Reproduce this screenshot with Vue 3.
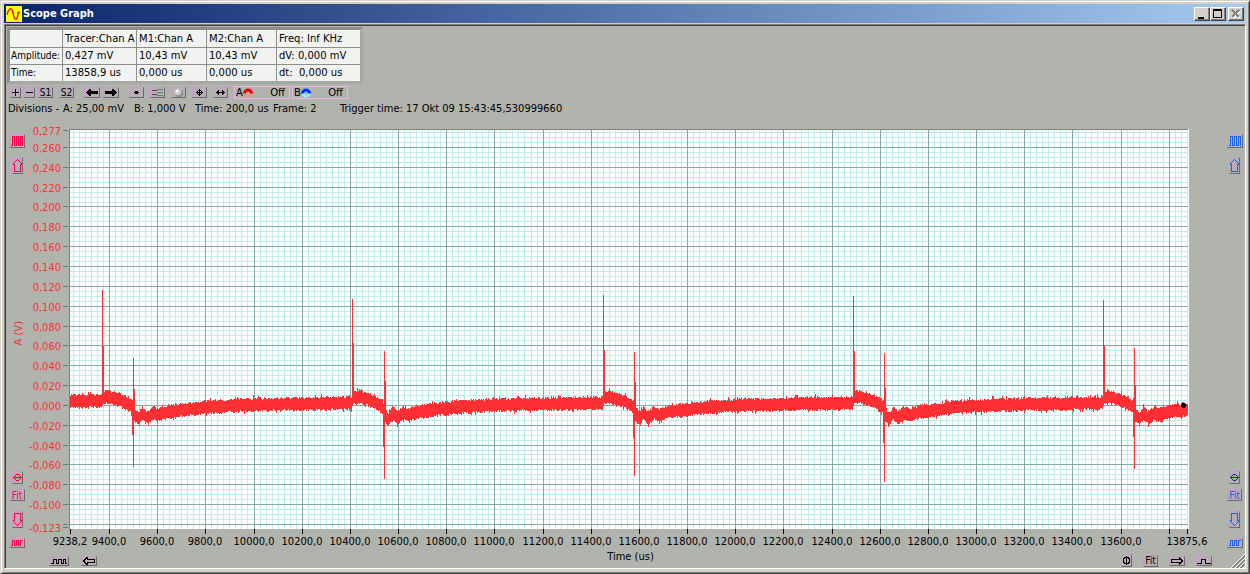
<script setup>
const readings = {
  head: ['Tracer:Chan A', 'M1:Chan A', 'M2:Chan A', 'Freq: Inf KHz'],
  rows: [
    { name: 'Amplitude:', cells: ['0,427 mV', '10,43 mV', '10,43 mV', 'dV: 0,000 mV'] },
    { name: 'Time:', cells: ['13858,9 us', '0,000 us', '0,000 us', 'dt:\u00a0 0,000 us'] },
  ],
}

const X_MIN = 9238.2
const X_MAX = 13875.6
const plot = { left: 69, top: 129, width: 1120, height: 400 }
const px = (t) => Math.floor(70.52 + ((t - X_MIN) / (X_MAX - X_MIN)) * 1117)
const py = (v) => Math.floor(405.38 - v * 992)
const comma = (n, d) => n.toFixed(d).replace('.', ',')

const xValues = [X_MIN]
for (let t = 9400; t <= 13600; t += 200) xValues.push(t)
xValues.push(X_MAX)
const xLabels = xValues.map((t) => ({ text: comma(t, 1), pos: ((px(t) - plot.left) / plot.width) * 100 }))
const xTicks = [...xValues, 13800].map(px)

const yValues = [0.277]
for (let i = 13; i >= -5; i--) yValues.push(i / 50)
yValues.push(-0.123)
const yLabels = yValues.map((v) => ({ text: comma(v, 3), pos: ((py(v) - plot.top) / plot.height) * 100 }))
const yTicks = [...yValues, -0.12].map(py)

let minor = ''
let major = ''
for (let i = 0; i < 186; i++) {
  const t = 9250 + i * 25
  const seg = `M${px(t)} 130h1v399h-1z`
  if (t % 200 === 0) major += seg
  else minor += seg
}
for (let i = 55; i >= -24; i--) {
  const seg = `M70 ${py(i / 200)}h1118v1h-1118z`
  if (i % 4 === 0) major += seg
  else minor += seg
}

let seed = 71
const rnd = () => {
  seed = (seed * 16807) % 2147483647
  return seed / 2147483647
}
const profile = [[0, 398], [6, 397], [14, 399], [22, 402], [30, 407], [32, 415], [36, 419], [40, 413], [45, 418],
  [51, 413], [56, 415], [65, 412], [80, 410], [105, 407], [145, 405], [190, 404], [250, 403]]
const centre = (t) => {
  for (let i = 1; i < profile.length; i++) {
    const [b, yb] = profile[i]
    if (t <= b) {
      const [a, ya] = profile[i - 1]
      return ya + ((yb - ya) * (t - a)) / (b - a)
    }
  }
  return 403
}
const pulses = [
  { x: 102, top: 290, side: 346, x2: 133, top2: 358, side2: 389, low: 467, lowSide: 435 },
  { x: 352, top: 299, side: 343, x2: 384, top2: 351, side2: 381, low: 479, lowSide: 447 },
  { x: 603, top: 295, side: 350, x2: 634, top2: 352, side2: 382, low: 476, lowSide: 438 },
  { x: 853, top: 296, side: 351, x2: 884, top2: 353, side2: 388, low: 482, lowSide: 443 },
  { x: 1103, top: 300, side: 346, x2: 1134, top2: 348, side2: 385, low: 469, lowSide: 437 },
]
let trace = ''
for (let x = 70; x < 1188; x++) {
  const pulse = [...pulses].reverse().find((p) => p.x <= x)
  const mid = pulse ? centre(x - pulse.x) : 401
  const up = Math.round(mid - 5 - rnd() * 2.4 - (rnd() > 0.88 ? 2 : 0))
  const down = Math.round(mid + 5 + rnd() * 2.4 + (rnd() > 0.9 ? 2 : 0))
  trace += `M${x} ${up}h1V${down}h-1z`
}
for (const p of pulses) {
  trace += `M${p.x} ${p.top}h1V406h-1zM${p.x + 1} ${p.side}h1V402h-1z`
  trace += `M${p.x2} ${p.top2}h1V${p.low}h-1zM${p.x2 + 1} ${p.side2}h1V415h-1zM${p.x2 - 1} 404h1V${p.lowSide}h-1z`
}

const sides = ['left', 'right']
</script>

<template>
  <div class="window">
    <header class="titlebar">
      <svg class="logo" viewBox="0 0 16 16" aria-hidden="true">
        <rect width="16" height="16" fill="#ff0" />
        <path d="M1.500 9V6.500L3 4Q5 1 6.500 5L8 11Q9.500 15 11 12L12 9V6.500H14" fill="none" stroke="#e00000" stroke-width="1.300" />
      </svg>
      <h1>Scope Graph</h1>
      <div class="controls">
        <button aria-label="Minimize"><svg width="12" height="10" viewBox="0 0 12 10"><path d="M2 8h6v2H2z" /></svg></button>
        <button aria-label="Maximize"><svg width="12" height="10" viewBox="0 0 12 10"><path d="M1 0h9v9H1zM2 2v6h7V2z" fill-rule="evenodd" /></svg></button>
        <button class="close" aria-label="Close" disabled>
          <svg width="12" height="10" viewBox="0 0 12 10" fill="none" stroke-width="2"><path d="M3 2l7 7M10 2l-7 7" stroke="#fff" /><path d="M2 1l7 7M9 1l-7 7" stroke="#808080" /></svg>
        </button>
      </div>
    </header>

    <main class="body">
      <table class="readings">
        <thead>
          <tr><td class="name"></td><th v-for="h in readings.head" :key="h" scope="col">{{ h }}</th></tr>
        </thead>
        <tbody>
          <tr v-for="r in readings.rows" :key="r.name">
            <th class="name" scope="row">{{ r.name }}</th>
            <td v-for="(c, i) in r.cells" :key="i">{{ c }}</td>
          </tr>
        </tbody>
      </table>

      <div class="toolbar">
        <div class="group zooms">
          <button class="tool sq" aria-label="Zoom in"><svg width="7" height="7" viewBox="0 0 7 7"><path d="M3 0h1v3h3v1H4v3H3V4H0V3h3z" /></svg></button>
          <button class="tool sq" aria-label="Zoom out"><svg width="7" height="7" viewBox="0 0 7 7"><path d="M0 3h7v1H0z" /></svg></button>
          <button class="tool text">S1</button>
        </div>
        <button class="tool text">S2</button>
        <div class="group arrows">
          <button class="tool wide" aria-label="Previous"><svg width="12" height="7" viewBox="0 0 12 7"><path d="M0 3h1V2h1V1h1V0h2v2h7v3H5v2H3V6H2V5H1V4H0z" /></svg></button>
          <button class="tool wide" aria-label="Next"><svg width="12" height="7" viewBox="0 0 12 7"><path d="M12 3h-1V2h-1V1H9V0H7v2H0v3h7v2h2V6h1V5h1V4h1z" /></svg></button>
        </div>
        <div class="group modes">
          <button class="tool mid" aria-label="Points"><svg width="7" height="5" viewBox="0 0 7 5"><path d="M2 1h3v1h1v1H5v1H2V3H1V2h1z" /></svg></button>
          <button class="tool mid" aria-label="List"><svg width="11" height="7" viewBox="0 0 11 7"><path d="M0 1h5v1H0zM0 5h5v1H0z" fill="#444" /><path d="M5 0h6v1H5zM5 3h6v1H5zM5 6h6v1H5z" fill="#4c9160" /></svg></button>
          <button class="tool mid" aria-label="Marker"><svg class="smooth" width="11" height="9" viewBox="0 0 11 9"><circle cx="6" cy="5" r="4" fill="#858585" /><circle cx="5" cy="4" r="3.500" fill="#c6c6c2" /><circle cx="4" cy="3" r="1.500" fill="#fff" /></svg></button>
          <button class="tool mid" aria-label="Move vertically"><svg width="7" height="7" viewBox="0 0 7 7"><path d="M3 0h1v1h1v1h1v1h1v1H6v1H5v1H4v1H3V6H2V5H1V4H0V3h1V2h1V1h1z" /><path d="M2 2h1v1H2zM4 2h1v1H4zM2 4h1v1H2zM4 4h1v1H4z" fill="#b8adb7" /></svg></button>
          <button class="tool mid" aria-label="Move horizontally"><svg width="9" height="7" viewBox="0 0 9 7"><path d="M2 1h1v2h3V1h1v1h1v1h1v1H8v1H7v1H6V4H3v2H2V5H1V4H0V3h1V2h1z" /></svg></button>
        </div>
        <div class="group channels">
          <button class="channel"><span>A</span>
            <svg class="smooth" width="10" height="10" viewBox="0 0 10 10"><circle cx="5" cy="5" r="3.300" fill="none" stroke="#ff9090" stroke-width="2.500" /><path d="M1.500 5.500A3.500 3.500 0 0 1 8.500 5.500" fill="none" stroke="#e80000" stroke-width="3" /></svg>
            <span class="state">Off</span></button>
          <button class="channel"><span>B</span>
            <svg class="smooth" width="10" height="10" viewBox="0 0 10 10"><circle cx="5" cy="5" r="3.300" fill="none" stroke="#90f4ff" stroke-width="2.500" /><path d="M1.500 5.500A3.500 3.500 0 0 1 8.500 5.500" fill="none" stroke="#0030ff" stroke-width="3" /></svg>
            <span class="state">Off</span></button>
        </div>
      </div>

      <div class="status">
        <span class="divisions">Divisions -</span>
        <span class="a">A: 25,00 mV</span>
        <span class="b">B: 1,000 V</span>
        <span class="time">Time: 200,0 us</span>
        <span class="frame">Frame: 2</span>
        <span>Trigger time: 17 Okt 09 15:43:45,530999660</span>
      </div>

      <section class="chart">
        <div v-for="side in sides" :key="side" class="side" :class="side">
          <div class="stack">
            <button class="tool pulses" aria-label="More cycles"><svg width="14" height="10" viewBox="0 0 14 10"><path d="M1 9.500h1.500v-9h2v9h2v-9h2v9h2v-9h2v9" fill="none" stroke="currentColor" /></svg></button>
            <button class="tool tall" aria-label="Shift up"><svg width="9" height="13" viewBox="0 0 9 13"><path d="M4.500 .5L.5 4.500v1h1v7h6v-7h1v-1z" fill="none" stroke="currentColor" /></svg></button>
          </div>
          <span v-if="side === 'left'" class="ytitle">A (V)</span>
          <div class="stack low">
            <button class="tool zero" aria-label="Zero offset"><svg width="9" height="9" viewBox="0 0 9 9"><path d="M3 1h3v1h1v1h1v1h1v1H8v1H7v1H6v1H3V7H2V6H1V5H0V4h1V3h1V2h1zM3 2v1H2v1h5V3H6V2zM2 5v1h1v1h3V6h1V5z" fill="currentColor" fill-rule="evenodd" /></svg></button>
            <button class="tool fit">Fit</button>
            <button class="tool tall down" aria-label="Shift down"><svg width="9" height="13" viewBox="0 0 9 13"><path d="M4.500 12.500L.5 8.500v-1h1v-7h6v7h1v1z" fill="none" stroke="currentColor" /></svg></button>
            <button class="tool short" aria-label="Fewer cycles"><svg width="14" height="6" viewBox="0 0 14 6"><path d="M1 5.500h1.500v-5h2v5h2v-5h2v5h2v-5H13" fill="none" stroke="currentColor" /></svg></button>
          </div>
        </div>

        <div class="yaxis">
          <span v-for="l in yLabels" :key="l.text" class="ylabel" :style="{ top: l.pos + '%' }">{{ l.text }}</span>
          <svg viewBox="0 129 5 400" preserveAspectRatio="none" aria-hidden="true"><path v-for="y in yTicks" :key="y" :d="`M0 ${y}h5v1H0z`" fill="#4c8484" /></svg>
        </div>

        <svg class="plot" viewBox="69 129 1120 400" preserveAspectRatio="none" role="img" aria-label="Channel A voltage over time">
          <rect x="69" y="129" width="1120" height="400" fill="#fff" />
          <path :d="minor" fill="#bfecec" />
          <path :d="major" fill="#84aaa6" />
          <path d="M69 129h1119v1H70v399h-1z" fill="#7c7f7c" />
          <path :d="trace" fill="#ff3033" />
          <path d="M1182 403h3v1h1v3h-1v1h-3v-1h-1v-3h1z" />
        </svg>

        <div class="xaxis">
          <svg viewBox="69 0 1120 5" preserveAspectRatio="none" aria-hidden="true"><path v-for="x in xTicks" :key="x" :d="`M${x} 0h1v5h-1z`" /></svg>
          <span v-for="l in xLabels" :key="l.text" class="xlabel" :style="{ left: l.pos + '%' }">{{ l.text }}</span>
        </div>
      </section>

      <footer class="bottom">
        <div class="bgroup start">
          <button class="tool bpulse" aria-label="Compress time"><svg width="16" height="6" viewBox="0 0 16 6"><path d="M0 5.500h2.500v-4h3v4h2v-4h3v4h2v-4h2v4H16" fill="none" stroke="currentColor" /></svg></button>
          <button class="tool barrow" aria-label="Scroll left"><svg width="12" height="8" viewBox="0 0 12 8"><path d="M.5 4L4 .5v2h7.500v3H4v2z" fill="none" stroke="currentColor" /></svg></button>
        </div>
        <span class="xtitle">Time (us)</span>
        <div class="bgroup end">
          <button class="tool bzero" aria-label="Zero time"><svg width="9" height="9" viewBox="0 0 9 9"><path d="M2.500 1.500h4v1h1v4h-1v1h-4v-1h-1v-4h1zM4.500 0v9" fill="none" stroke="currentColor" /></svg></button>
          <button class="tool fit">Fit</button>
          <button class="tool barrow" aria-label="Scroll right"><svg width="12" height="8" viewBox="0 0 12 8"><path d="M11.500 4L8 .5v2H.5v3H8v2z" fill="none" stroke="currentColor" /></svg></button>
          <button class="tool bstep" aria-label="Expand time"><svg width="14" height="6" viewBox="0 0 14 6"><path d="M0 5.500h4.500v-4h4v4H14" fill="none" stroke="currentColor" /></svg></button>
        </div>
      </footer>
      <svg class="grip smooth" width="14" height="14" viewBox="0 0 14 14" aria-hidden="true">
        <path d="M0 14L14 0M4 14L14 4M8 14l6-6M12 14l2-2" stroke="#fff" /><path d="M1 14L14 1M2 14L14 2M5 14l9-9M6 14l8-8M9 14l5-5M10 14l4-4" stroke="#808080" />
      </svg>
    </main>
  </div>
</template>

<style>
body {
  background: #d4d0c8;
}
</style>

<style scoped>
* {
  box-sizing: border-box;
}
.window {
  display: flex;
  flex-direction: column;
  min-height: 100vh;
  padding: 2px;
  border: 1px solid;
  border-color: #d4d0c8 #404040 #404040 #d4d0c8;
  box-shadow: inset 1px 1px #fff, inset -1px -1px #808080;
  background: #d4d0c8;
  font: 11px/14px "DejaVu Sans Condensed", "DejaVu Sans", sans-serif;
  color: #000;
}
svg {
  display: block;
  flex: none;
  shape-rendering: crispEdges;
}
.smooth,
.logo {
  shape-rendering: auto;
}
button {
  font: inherit;
  color: inherit;
  padding: 0;
  margin: 0;
  border-radius: 0;
}
.titlebar {
  display: flex;
  align-items: center;
  height: 19px;
  margin: 1px;
  padding: 0 2px;
  background: linear-gradient(90deg, #0a246a, #a6caf0);
}
.logo {
  width: 16px;
  height: 16px;
}
h1 {
  flex: 1;
  margin: 0 0 0 1px;
  font-size: 11px;
  line-height: 16px;
  color: #fff;
}
.controls {
  display: flex;
}
.controls button {
  display: grid;
  place-items: center;
  width: 16px;
  height: 14px;
  border: 1px solid;
  border-color: #fff #404040 #404040 #fff;
  background: #d4d0c8;
  box-shadow: inset -1px -1px #808080;
}
.controls .close {
  margin-left: 2px;
}
.body {
  position: relative;
  flex: 1;
  display: flex;
  flex-direction: column;
  margin: 0 1px 2px;
  border: 1px solid;
  border-color: #808080 #fff #fff #808080;
  box-shadow: inset 1px 1px #404040;
  padding: 2px 1px 0 1px;
  background: #b1b3ad;
}
.readings {
  align-self: flex-start;
  border: 3px solid;
  border-color: #8e908b #a6a8a2 #a6a8a2 #8e908b;
  margin-left: 1px;
  border-collapse: separate;
  border-spacing: 0;
  font: 10px/16px "DejaVu Sans", sans-serif;
  background: #f1f3f0;
}
.readings th,
.readings td {
  width: 70px;
  height: 17px;
  padding: 0 0 0 2px;
  border: solid #8c8e8a;
  border-width: 0 1px 1px 0;
  text-align: left;
  font-weight: 400;
  white-space: nowrap;
}
.readings thead tr > * {
  height: 18px;
}
.readings th:nth-child(2),
.readings td:nth-child(2) {
  width: 74px;
}
.readings .name {
  width: 53px;
  padding-left: 1px;
  font-family: "DejaVu Sans Condensed", sans-serif;
}
.readings th:last-child,
.readings td:last-child {
  width: 83px;
  border-right: 0;
}
.readings tbody tr:last-child > * {
  height: 16px;
  border-bottom: 0;
}
.toolbar {
  display: flex;
  align-items: center;
  height: 13px;
  margin: 2px 0 0 4px;
}
.group,
.bgroup {
  display: flex;
  align-items: center;
}
.tool {
  display: grid;
  place-items: center;
  border: 1px solid;
  border-color: #cc9acc #6c6a70 #6c6a70 #cc9acc;
  background: #b8adb7;
  font: 10px/9px "DejaVu Sans Condensed", sans-serif;
}
.toolbar .tool {
  height: 11px;
}
.zooms {
  gap: 3px;
  margin-right: 6px;
}
.sq {
  width: 11px;
}
.text {
  width: 15px;
}
.arrows {
  gap: 3px;
  margin: 0 10px;
}
.wide {
  width: 16px;
}
.modes {
  gap: 6px;
}
.mid {
  width: 15px;
}
.channels {
  gap: 2px;
  margin-left: 6px;
}
.channel {
  display: flex;
  align-items: center;
  width: 56px;
  height: 13px;
  padding: 0 4px 0 1px;
  border: 1px solid #efb2ef;
  background: #b1b3ad;
  font: 10px/11px "DejaVu Sans", sans-serif;
}
.state {
  margin-left: auto;
}
.status {
  display: flex;
  margin: 3px 0 0 2px;
  white-space: nowrap;
}
.divisions {
  width: 55px;
}
.a {
  width: 71px;
}
.b {
  width: 61px;
}
.time {
  width: 78px;
}
.frame {
  width: 67px;
}
.chart {
  flex: 1;
  display: grid;
  grid-template-columns: 26px 37px minmax(0, 1fr) 55px;
  grid-template-rows: minmax(300px, 1fr) 20px;
  margin-top: 13px;
}
.side {
  grid-row: 1 / 3;
  display: flex;
  flex-direction: column;
  justify-content: space-between;
  align-items: center;
  padding: 5px 0 1px;
}
.left {
  grid-column: 1;
  padding-right: 4px;
  color: #ff0050;
}
.right {
  grid-column: 4;
  padding-left: 36px;
  color: #1d62dc;
}
.stack {
  display: flex;
  flex-direction: column;
  align-items: center;
  gap: 9px;
}
.low {
  gap: 5px;
}
.pulses {
  width: 16px;
  height: 14px;
}
.tall {
  width: 11px;
  height: 17px;
}
.zero {
  width: 11px;
  height: 13px;
}
.left .zero {
  color: #f00010;
}
.right .zero {
  color: #0030e0;
}
.fit {
  width: 15px;
  height: 12px;
}
.down,
.short {
  margin-top: 5px;
}
.short {
  width: 16px;
  height: 10px;
}
.ytitle {
  writing-mode: vertical-rl;
  transform: rotate(180deg);
  margin-left: 4px;
  padding-bottom: 22px;
  color: #ff3033;
}
.yaxis {
  grid-column: 2;
  grid-row: 1;
  position: relative;
  display: flex;
  justify-content: flex-end;
  padding-right: 1px;
  color: #ff3033;
}
.yaxis svg {
  width: 5px;
  height: 0;
  min-height: 100%;
}
.ylabel {
  position: absolute;
  right: 8px;
  margin-top: -5px;
}
.plot {
  grid-column: 3;
  grid-row: 1;
  width: 100%;
  height: 0;
  min-height: 100%;
}
.xaxis {
  grid-column: 3;
  grid-row: 2;
  position: relative;
}
.xaxis svg {
  width: 100%;
  height: 5px;
}
.xlabel {
  position: absolute;
  top: 6px;
  transform: translateX(-50%);
}
.bottom {
  display: flex;
  align-items: flex-start;
  height: 19px;
  padding-right: 26px;
}
.xtitle {
  padding-top: 1px;
}
.bgroup {
  flex: 1;
  height: 13px;
  margin-top: 5px;
}
.start {
  padding-left: 43px;
  gap: 12px;
}
.end {
  justify-content: flex-end;
  gap: 11px;
  padding-right: 6px;
}
.bpulse {
  width: 20px;
  height: 10px;
}
.barrow {
  width: 16px;
  height: 10px;
}
.bzero {
  width: 11px;
  height: 13px;
}
.bstep {
  width: 16px;
  height: 10px;
}
.grip {
  position: absolute;
  right: 0;
  bottom: 0;
}
</style>
